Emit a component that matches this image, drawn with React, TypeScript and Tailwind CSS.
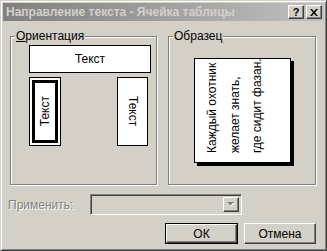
import React from "react";

const raised =
  "bg-[#d4d0c8] border border-t-white border-l-white border-r-[#404040] border-b-[#404040] shadow-[inset_-1px_-1px_0_#808080]";
const etched = "relative border border-[#808080] shadow-[1px_1px_0_#fff,inset_1px_1px_0_#fff]";

function GroupLabel({ children, left }: { children: React.ReactNode; left: string }) {
  return (
    <span className={`absolute -top-[8px] ${left} bg-[#d4d0c8] px-[1px] leading-[14px] text-black`}>
      {children}
    </span>
  );
}

export default function App() {
  return (
    <div className="w-[327px] h-[251px] bg-[#d4d0c8] border border-t-[#d4d0c8] border-l-[#d4d0c8] border-r-[#404040] border-b-[#404040] shadow-[inset_1px_1px_0_#fff,inset_-1px_-1px_0_#808080] p-[2px] font-['Liberation_Sans',Arial,sans-serif] text-[12px] text-black select-none">
      {/* заголовок */}
      <div className="h-[18px] flex items-center justify-between bg-gradient-to-r from-[#808080] to-[#c0c0c0] pl-[3px] pr-[2px]">
        <span className="text-[12px] font-bold text-[#d4d0c8] leading-none">
          Направление текста - Ячейка таблицы
        </span>
        <div className="flex gap-[2px]">
          <div className={`${raised} w-[16px] h-[14px] flex items-center justify-center`}>
            <span className="text-[11px] font-bold leading-none">?</span>
          </div>
          <div className={`${raised} w-[16px] h-[14px] flex items-center justify-center`}>
            <svg width="8" height="7" viewBox="0 0 8 7">
              <path d="M0 0h2l2 2.5L6 0h2L5 3.5 8 7H6L4 4.5 2 7H0l3-3.5z" fill="#000" />
            </svg>
          </div>
        </div>
      </div>

      {/* содержимое */}
      <div className="pl-[7px] pt-[15px]">
        <div className="flex gap-[11px]">
          <div className={`${etched} w-[147px] h-[149px] pl-[18px] pt-[8px]`}>
            <GroupLabel left="left-[4px]">
              <span className="underline">О</span>риентация
            </GroupLabel>
            <div className="w-[122px] h-[28px] bg-white border border-black flex items-center justify-center">
              Текст
            </div>
            <div className="flex mt-[4px]">
              <div className="w-[32px] h-[69px] bg-white border border-black p-[2px]">
                <div className="w-full h-full border-[3px] border-black flex items-center justify-center">
                  <span className="[writing-mode:vertical-rl] rotate-180">Текст</span>
                </div>
              </div>
              <div className="ml-[56px] w-[31px] h-[69px] bg-white border border-black flex items-center justify-center">
                <span className="[writing-mode:vertical-rl]">Текст</span>
              </div>
            </div>
          </div>

          <div className={`${etched} w-[148px] h-[149px] pl-[25px] pt-[21px]`}>
            <GroupLabel left="left-[4px]">Образец</GroupLabel>
            <div className="w-[97px] h-[105px] bg-white border border-black shadow-[3px_3px_0_#000] flex pl-[6px] pb-[9px] pt-[4px]">
              <div className="[writing-mode:vertical-rl] rotate-180 leading-[22.5px] whitespace-nowrap">
                Каждый охотник
                <br />
                желает знать,
                <br />
                где сидит фазан.
              </div>
            </div>
          </div>
        </div>

        {/* применить */}
        <div className="flex items-center mt-[9px] -ml-[2px]">
          <span className="w-[82px] text-[#808080] [text-shadow:1px_1px_0_#fff]">Применить:</span>
          <div className="w-[152px] h-[21px] border border-t-[#808080] border-l-[#808080] border-r-white border-b-white shadow-[inset_1px_1px_0_#404040,inset_-1px_-1px_0_#d4d0c8] bg-[#d4d0c8] flex justify-end p-[2px]">
            <div className={`${raised} w-[16px] h-full flex items-center justify-center`}>
              <svg width="8" height="5" viewBox="0 0 8 5">
                <path d="M1 1h7L4.5 4.5z" fill="#fff" />
                <path d="M0 0h7L3.5 3.5z" fill="#808080" />
              </svg>
            </div>
          </div>
        </div>

        {/* кнопки */}
        <div className="flex justify-end gap-[6px] mt-[8px] pr-[8px]">
          <div className="w-[73px] h-[21px] border border-black">
            <div className={`${raised} w-full h-full flex items-center justify-center`}>ОК</div>
          </div>
          <div className={`${raised} w-[72px] h-[21px] flex items-center justify-center`}>Отмена</div>
        </div>
      </div>
    </div>
  );
}
